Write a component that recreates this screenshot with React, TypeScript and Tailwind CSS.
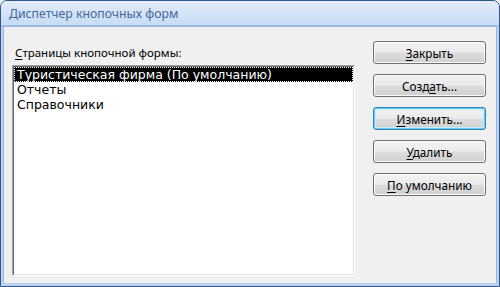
import React from "react";

const font = { fontFamily: '"Noto Sans", "Open Sans", sans-serif' };

function Btn({ pre, u, post, focused }: { pre: string; u: string; post: string; focused?: boolean }) {
  return (
    <div
      className={
        "h-[23px] w-[113px] rounded-[3px] border flex items-center justify-center text-[11.75px] leading-[16px] text-black bg-[linear-gradient(#f2f2f2_0%,#ebebeb_48%,#dddddd_52%,#cfcfcf_100%)] " +
        (focused
          ? "border-[#3c7fb1] shadow-[inset_0_0_0_1px_#5ccff7,inset_0_0_0_2px_#c4effc]"
          : "border-[#707070] shadow-[inset_0_0_0_1px_#fbfbfb]")
      }
    >
      <span>
        {pre}
        <span className="underline underline-offset-2">{u}</span>
        {post}
      </span>
    </div>
  );
}

export default function App() {
  return (
    <div className="w-[500px] h-[287px] bg-[#f0f0f0]" style={font}>
      <div className="w-[500px] h-[287px] border border-[#34558a] rounded-t-[7px] bg-[#bcd3f0] flex flex-col overflow-hidden">
        <div className="h-[24px] shrink-0 bg-[linear-gradient(#e2ecf9,#d3e3f7_55%,#c8dcf4)] flex items-center pl-[8px] pt-[2px]">
          <span className="text-[12.25px] leading-[16px] text-[#46679a]">Диспетчер кнопочных форм</span>
        </div>
        <div className="h-px shrink-0 bg-[#9fbbe2]" />
        <div className="flex-1 mx-[2px] mb-[3px] border-t border-l border-r border-[#9db8de] bg-[#f0f0f0] flex pt-[14px] pl-[8px]">
          <div className="w-[343px] flex flex-col">
            <div className="h-[24px] pl-[3px] text-[11.5px] leading-[16px] text-black flex items-center">
              <span>
                <span className="underline underline-offset-2">С</span>траницы кнопочной формы:
              </span>
            </div>
            <div className="h-[211px] border border-t-[#a0a0a0] border-l-[#a0a0a0] border-r-[#fcfcfc] border-b-[#fcfcfc]">
              <div className="h-full border border-t-[#696969] border-l-[#696969] border-r-[#e3e3e3] border-b-[#e3e3e3] bg-white">
                <div
                  className="text-[12.5px] leading-[14px] text-black"
                  style={{ fontFamily: '"DejaVu Sans", "Noto Sans", sans-serif' }}
                >
                  <div className="h-[15px] bg-black text-white border border-dotted border-white pl-[2px] flex items-center">
                    Туристическая фирма (По умолчанию)
                  </div>
                  <div className="h-[15px] pl-[3px] flex items-center">Отчеты</div>
                  <div className="h-[15px] pl-[3px] flex items-center">Справочники</div>
                </div>
              </div>
            </div>
          </div>
          <div className="ml-[18px] flex flex-col gap-[10px]">
            <Btn pre="" u="З" post="акрыть" />
            <Btn pre="Созд" u="а" post="ть..." />
            <Btn pre="" u="И" post="зменить..." focused />
            <Btn pre="" u="У" post="далить" />
            <Btn pre="" u="П" post="о умолчанию" />
          </div>
        </div>
      </div>
    </div>
  );
}
